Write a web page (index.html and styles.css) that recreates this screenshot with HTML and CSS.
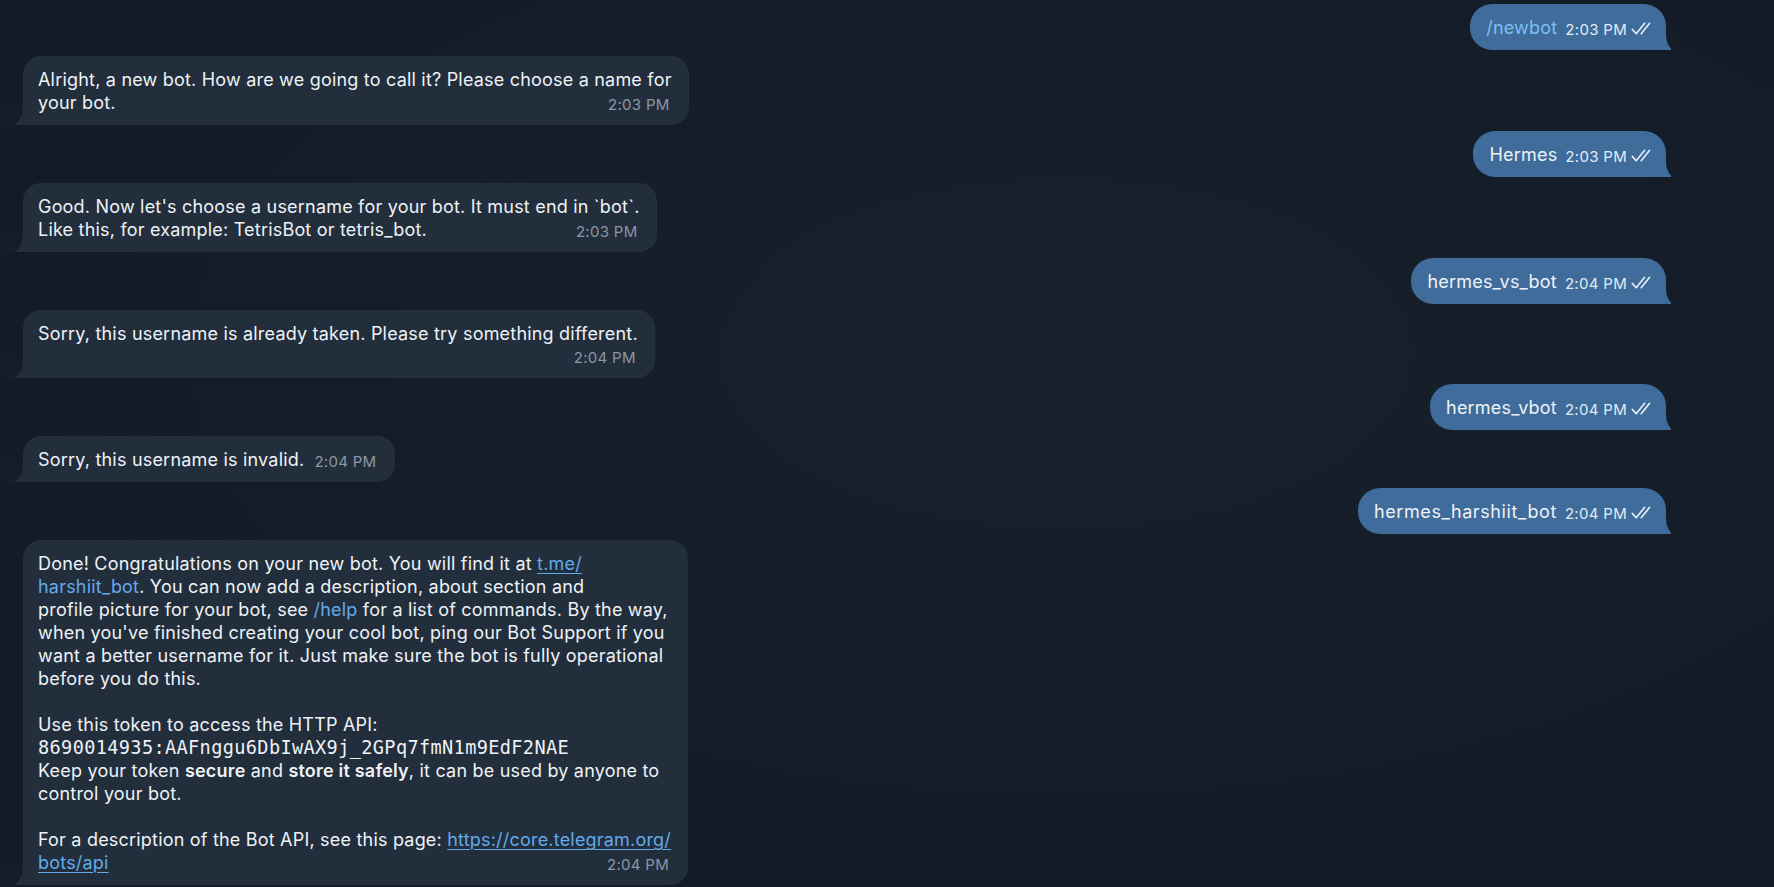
FILE: index.html
```html
<!DOCTYPE html>
<html lang="en">
<head>
<meta charset="utf-8">
<title>BotFather chat</title>
<link rel="stylesheet" href="styles.css">
</head>
<body>
<main class="chat">

  <div class="row out">
    <div class="bubble out">
      <span class="cmd">/newbot</span>
      <span class="meta"><span class="time">2:03 PM</span><svg class="checks" viewBox="0 0 19 12" aria-hidden="true"><path d="M1 6.8 L4.6 10.8 L12.4 1.2"/><path d="M9.2 10.8 L17 1.2"/></svg></span>
    </div>
  </div>

  <div class="row in">
    <div class="bubble in">
      <div class="line">Alright, a new bot. How are we going to call it? Please choose a name for</div>
      <div class="line last"><span>your bot.</span><span class="time">2:03 PM</span></div>
    </div>
  </div>

  <div class="row out">
    <div class="bubble out">
      <span>Hermes</span>
      <span class="meta"><span class="time">2:03 PM</span><svg class="checks" viewBox="0 0 19 12" aria-hidden="true"><path d="M1 6.8 L4.6 10.8 L12.4 1.2"/><path d="M9.2 10.8 L17 1.2"/></svg></span>
    </div>
  </div>

  <div class="row in">
    <div class="bubble in">
      <div class="line">Good. Now let's choose a username for your bot. It must end in `bot`.</div>
      <div class="line last"><span>Like this, for example: TetrisBot or tetris_bot.</span><span class="time">2:03 PM</span></div>
    </div>
  </div>

  <div class="row out">
    <div class="bubble out">
      <span>hermes_vs_bot</span>
      <span class="meta"><span class="time">2:04 PM</span><svg class="checks" viewBox="0 0 19 12" aria-hidden="true"><path d="M1 6.8 L4.6 10.8 L12.4 1.2"/><path d="M9.2 10.8 L17 1.2"/></svg></span>
    </div>
  </div>

  <div class="row in">
    <div class="bubble in">
      <div class="line">Sorry, this username is already taken. Please try something different.</div>
      <div class="line last"><span></span><span class="time">2:04 PM</span></div>
    </div>
  </div>

  <div class="row out">
    <div class="bubble out">
      <span>hermes_vbot</span>
      <span class="meta"><span class="time">2:04 PM</span><svg class="checks" viewBox="0 0 19 12" aria-hidden="true"><path d="M1 6.8 L4.6 10.8 L12.4 1.2"/><path d="M9.2 10.8 L17 1.2"/></svg></span>
    </div>
  </div>

  <div class="row in">
    <div class="bubble in">
      <div class="line last single"><span>Sorry, this username is invalid.</span><span class="time">2:04 PM</span></div>
    </div>
  </div>

  <div class="row out">
    <div class="bubble out">
      <span class="wide">hermes_harshiit_bot</span>
      <span class="meta"><span class="time">2:04 PM</span><svg class="checks" viewBox="0 0 19 12" aria-hidden="true"><path d="M1 6.8 L4.6 10.8 L12.4 1.2"/><path d="M9.2 10.8 L17 1.2"/></svg></span>
    </div>
  </div>

  <div class="row in">
    <div class="bubble in">
      <div class="line">Done! Congratulations on your new bot. You will find it at <a class="link u">t.me/</a></div>
      <div class="line"><a class="link">harshiit_bot</a>. You can now add a description, about section and</div>
      <div class="line">profile picture for your bot, see <a class="link">/help</a> for a list of commands. By the way,</div>
      <div class="line">when you've finished creating your cool bot, ping our Bot Support if you</div>
      <div class="line">want a better username for it. Just make sure the bot is fully operational</div>
      <div class="line">before you do this.</div>
      <div class="line blank"></div>
      <div class="line">Use this token to access the HTTP API:</div>
      <div class="line"><code class="token">8690014935:AAFnggu6DbIwAX9j_2GPq7fmN1m9EdF2NAE</code></div>
      <div class="line">Keep your token <b>secure</b> and <b>store it safely</b>, it can be used by anyone to</div>
      <div class="line">control your bot.</div>
      <div class="line blank"></div>
      <div class="line">For a description of the Bot API, see this page: <a class="link u">https://core.telegram.org/</a></div>
      <div class="line last"><a class="link u">bots/api</a><span class="time">2:04 PM</span></div>
    </div>
  </div>

</main>
</body>
</html>
```

FILE: styles.css
```css
* { box-sizing: border-box; }

html, body {
  margin: 0;
  height: 100%;
  background: #141c27;
  overflow: hidden;
}

body {
  font-family: Inter, "Noto Sans", sans-serif;
  font-size: 18px;
  letter-spacing: 0.2px;
  line-height: 23px;
  color: #eef2f6;
  -webkit-font-smoothing: antialiased;
}

.chat {
  display: flex;
  flex-direction: column;
  gap: 6px;
  padding: 4px 108px 0 23px;
  background: radial-gradient(ellipse at 60% 40%, #17202c 0%, #141b26 70%);
  min-height: 100%;
}

.row { display: flex; }
.row.in { justify-content: flex-start; }
.row.out { justify-content: flex-end; }

.bubble {
  position: relative;
}

.bubble.in {
  background: #222e3c;
  border-radius: 18px 18px 18px 0;
  padding: 12px 17px 10px 15px;
}

.bubble.in::before {
  content: "";
  position: absolute;
  left: -10px;
  bottom: 0;
  width: 12px;
  height: 18px;
  background: #222e3c;
}

.bubble.in::after {
  content: "";
  position: absolute;
  left: -22px;
  bottom: 0;
  width: 22px;
  height: 22px;
  background: #151d28;
  border-bottom-right-radius: 12px 18px;
}

.bubble.out {
  background: #3f6c9b;
  border-radius: 22px 22px 0 22px;
  padding: 12px 14px 10px 16px;
  display: flex;
  align-items: baseline;
  gap: 8px;
  white-space: nowrap;
}

.bubble.out .wide { letter-spacing: 0.6px; }

.bubble.out::before {
  content: "";
  position: absolute;
  right: -5px;
  bottom: 0;
  width: 7px;
  height: 14px;
  background: #3f6c9b;
}

.bubble.out::after {
  content: "";
  position: absolute;
  right: -14px;
  bottom: 0;
  width: 14px;
  height: 18px;
  background: #151d28;
  border-bottom-left-radius: 9px 15px;
}

.line {
  white-space: nowrap;
}

.line.blank { height: 23px; }

.line.last {
  display: flex;
  justify-content: space-between;
  align-items: baseline;
  gap: 10px;
}

.time {
  font-size: 15px;
  letter-spacing: 0.3px;
  color: #8b97a4;
  margin-right: 2px;
  position: relative;
  top: 1px;
}

.meta {
  display: inline-flex;
  align-items: baseline;
  gap: 4px;
}

.meta .time {
  color: #e2ebf4;
  margin-right: 0;
}

.checks {
  width: 21px;
  height: 13px;
  fill: none;
  stroke: #e6eef7;
  stroke-width: 1.5;
  stroke-linecap: round;
  stroke-linejoin: round;
  position: relative;
  top: 1px;
}

.cmd { color: #7cc0f5; }

.link {
  color: #62aaea;
  text-decoration: none;
}

.link.u {
  text-decoration: underline;
  text-underline-offset: 3px;
  text-decoration-thickness: 1px;
}

b { font-weight: 600; }

.token {
  font-family: "DejaVu Sans Mono", "Liberation Mono", monospace;
  font-size: 18.6px;
  letter-spacing: 0.35px;
  color: #eef2f6;
}
```
